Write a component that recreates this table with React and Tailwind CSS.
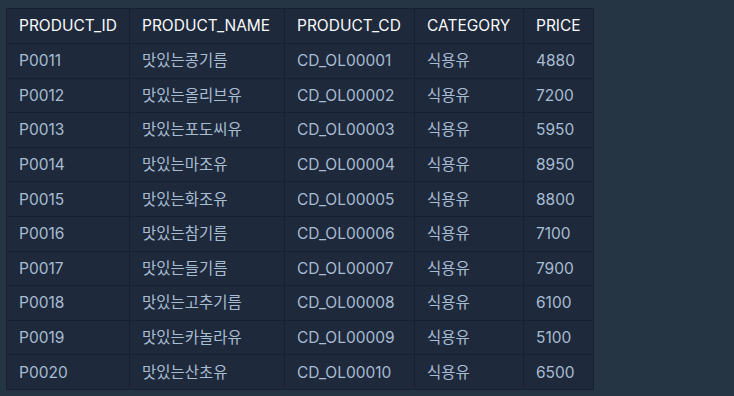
import React from 'react'

const rows = [
  ['P0011', '맛있는콩기름', 'CD_OL00001', '식용유', 4880],
  ['P0012', '맛있는올리브유', 'CD_OL00002', '식용유', 7200],
  ['P0013', '맛있는포도씨유', 'CD_OL00003', '식용유', 5950],
  ['P0014', '맛있는마조유', 'CD_OL00004', '식용유', 8950],
  ['P0015', '맛있는화조유', 'CD_OL00005', '식용유', 8800],
  ['P0016', '맛있는참기름', 'CD_OL00006', '식용유', 7100],
  ['P0017', '맛있는들기름', 'CD_OL00007', '식용유', 7900],
  ['P0018', '맛있는고추기름', 'CD_OL00008', '식용유', 6100],
  ['P0019', '맛있는카놀라유', 'CD_OL00009', '식용유', 5100],
  ['P0020', '맛있는산초유', 'CD_OL00010', '식용유', 6500],
]

const cols = [
  { name: 'PRODUCT_ID', w: 'w-[123px]' },
  { name: 'PRODUCT_NAME', w: 'w-[155px]' },
  { name: 'PRODUCT_CD', w: 'w-[130px]' },
  { name: 'CATEGORY', w: 'w-[109px]' },
  { name: 'PRICE', w: 'w-[70px]' },
]

const App = () => {
  return (
    <div className="min-h-[396px] w-[734px] bg-[#263544] pt-2 pl-[6px] font-['Inter','Noto_Sans_CJK_KR',sans-serif] text-[15.5px]">
      <table className="table-fixed border-collapse bg-[#1e293b] border border-[#172131]">
        <thead>
          <tr className="h-[35px]">
            {cols.map(c => (
              <th key={c.name} className={`${c.w} border border-[#172131] px-3 text-left font-normal text-[#f8fafc]`}>
                {c.name}
              </th>
            ))}
          </tr>
        </thead>
        <tbody>
          {rows.map(r => (
            <tr key={r[0]} className="h-[34.6px]">
              {r.map((v, i) => (
                <td key={i} className="border border-[#172131] px-3 text-[#a8bcd2]">
                  {v}
                </td>
              ))}
            </tr>
          ))}
        </tbody>
      </table>
    </div>
  )
}

export default App
